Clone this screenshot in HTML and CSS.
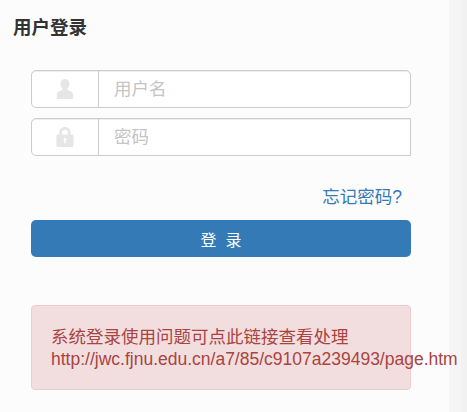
FILE: index.html
```html
<!DOCTYPE html>
<html lang="zh-CN">
<head>
  <meta charset="UTF-8">
  <title>用户登录</title>
  <link rel="stylesheet" href="styles.css">
</head>
<body>
  <div class="page">
    <div class="panel">
      <h3 class="title">用户登录</h3>
      <form class="login">
        <div class="input-group">
          <span class="addon">
            <svg class="icon" viewBox="0 0 18 22" width="18" height="20"><path d="M9 0c3 0 5 2.300 5 5.500 0 2.300-1 4.200-2.500 5.300v1.400c3 .8 6.500 2 6.500 4.800V22H0v-5c0-2.800 3.500-4 6.500-4.800v-1.400C5 9.700 4 7.800 4 5.500 4 2.300 6 0 9 0z"/></svg>
          </span>
          <input class="field" type="text" placeholder="用户名">
        </div>
        <div class="input-group square-end">
          <span class="addon">
            <svg class="icon" viewBox="0 0 18 21" width="18" height="20"><path fill-rule="evenodd" d="M9 0c3.300 0 6 2.400 6 5.500V8h1.500c.8 0 1.500.7 1.500 1.500v10c0 .8-.7 1.500-1.500 1.500h-15C.7 21 0 20.300 0 19.500v-10C0 8.700.7 8 1.500 8H3V5.500C3 2.400 5.700 0 9 0zm0 3C7.300 3 6 4.100 6 5.600V8h6V5.600C12 4.100 10.700 3 9 3zm0 8.500c-.9 0-1.600.7-1.600 1.500 0 .6.300 1.100.8 1.400V17h1.600v-2.600c.5-.3.800-.8.800-1.400 0-.8-.7-1.500-1.600-1.500z"/></svg>
          </span>
          <input class="field" type="password" placeholder="密码">
        </div>
        <div class="forgot"><a href="#">忘记密码?</a></div>
        <button class="btn" type="button">登&nbsp;&nbsp;录</button>
      </form>
      <div class="alert">系统登录使用问题可点此链接查看处理<br>http://jwc.fjnu.edu.cn/a7/85/c9107a239493/page.htm</div>
    </div>
    <div class="side"></div>
    <div class="edge"></div>
  </div>
</body>
</html>
```

FILE: styles.css
```css
* {
  box-sizing: border-box;
}

html, body {
  height: 100%;
  overflow: hidden;
}

body {
  margin: 0;
  font-family: "Liberation Sans", "Noto Sans CJK SC", sans-serif;
  font-size: 17.5px;
  color: #333;
}

.page {
  display: flex;
  height: 412px;
}

/* the alert text runs past the panel, so it has to stay above .side */
.panel {
  position: relative;
  z-index: 1;
  width: 449px;
  flex: none;
  background: #fcfcfc;
  padding: 18px 0 0 13px;
}

.side {
  width: 12px;
  flex: none;
  background: #f5f5f5;
}

.edge {
  flex: 1;
  background: #f1f1f1;
}

.title {
  margin: 0;
  font-size: 18.5px;
  line-height: 20px;
  font-weight: bold;
}

.login {
  width: 380px;
  margin: 32px 0 0 18px;
}

.input-group {
  display: flex;
  height: 38px;
  margin-bottom: 10px;
  background: #fff;
  border: 1px solid #ccc;
  border-radius: 5px;
  box-shadow: inset 0 1px 1px rgba(0,0,0,.075);
}

.input-group.square-end {
  border-radius: 5px 0 0 5px;
}

.addon {
  width: 67px;
  flex: none;
  display: flex;
  align-items: center;
  justify-content: center;
  border-right: 1px solid #ccc;
}

.icon {
  fill: #e6e6e6;
}

.field {
  flex: 1;
  min-width: 0;
  border: none;
  outline: none;
  background: transparent;
  padding: 0 15px;
  font: inherit;
  color: #555;
}

.field::placeholder {
  color: #c4c4c4;
  opacity: 1;
}

.forgot {
  margin-top: 31px;
  padding-right: 9px;
  text-align: right;
  line-height: 20px;
}

.forgot a {
  color: #337ab7;
  text-decoration: none;
}

.btn {
  display: block;
  width: 100%;
  height: 37px;
  margin-top: 13px;
  border: none;
  border-radius: 5px;
  background: #337ab7;
  color: #fff;
  font: inherit;
  font-size: 16px;
}

.alert {
  width: 380px;
  height: 85px;
  margin: 48px 0 0 18px;
  padding: 20px 19px;
  border: 1px solid #ebccd1;
  border-radius: 4px;
  background: #f2dede;
  color: #a94442;
  line-height: 22px;
  white-space: nowrap;
}
```
